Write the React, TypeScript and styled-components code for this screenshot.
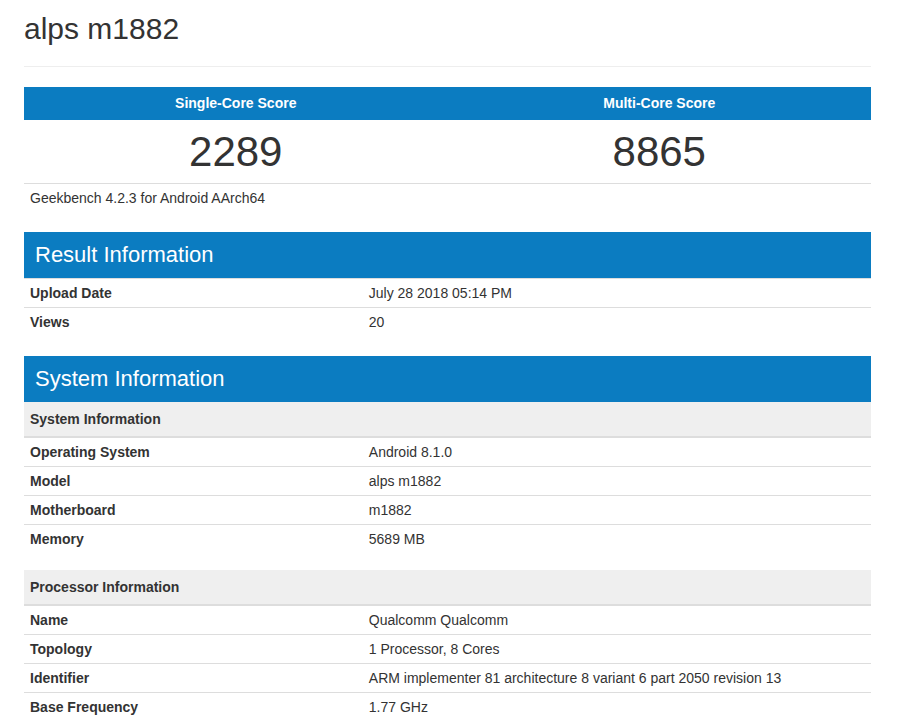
import styled, { createGlobalStyle } from "styled-components";

const GlobalStyle = createGlobalStyle`
  body {
    margin: 0;
    background: #ffffff;
    color: #333333;
    font-family: "Liberation Sans", Arial, sans-serif;
    font-size: 14px;
  }
`;

const BLUE = "#0b7cc1";

const Page = styled.div`
  width: 847px;
  padding: 12px 0 0 24px;
`;

const Title = styled.h1`
  margin: 0;
  font-size: 30px;
  font-weight: 400;
  line-height: 33px;
  color: #333333;
`;

const Divider = styled.hr`
  margin: 21px 0 20px;
  border: 0;
  border-top: 1px solid #eeeeee;
`;

const ScoreGrid = styled.div`
  display: grid;
  grid-template-columns: 1fr 1fr;
`;

const ScoreHead = styled.div`
  background: ${BLUE};
  color: #ffffff;
  font-weight: 700;
  font-size: 14px;
  line-height: 33px;
  text-align: center;
`;

const ScoreValue = styled.div`
  font-size: 42px;
  line-height: 63px;
  text-align: center;
  color: #333333;
`;

const Note = styled.div`
  border-top: 1px solid #dddddd;
  padding: 4px 6px 5px;
  line-height: 20px;
  margin-bottom: 19px;
`;

const Section = styled.section`
  margin-bottom: 20px;
`;

const SectionHead = styled.h2`
  margin: 0;
  background: ${BLUE};
  color: #ffffff;
  font-size: 22px;
  font-weight: 400;
  line-height: 46px;
  padding: 0 11px;
`;

const Group = styled.div`
  & + & {
    margin-top: 17px;
  }
`;

const GroupHead = styled.div`
  background: #efefef;
  border-bottom: 1px solid #dddddd;
  font-weight: 700;
  line-height: 20px;
  padding: 7px 6px;
`;

const Row = styled.div`
  display: grid;
  grid-template-columns: 40% 60%;
  line-height: 20px;
  border-top: 1px solid #dddddd;
`;

const Label = styled.div`
  padding: 4px 6px;
  font-weight: 700;
`;

const Value = styled.div`
  padding: 4px 6px;
`;

type Item = [string, string];

const resultInfo: Item[] = [
  ["Upload Date", "July 28 2018 05:14 PM"],
  ["Views", "20"],
];

const systemInfo: Item[] = [
  ["Operating System", "Android 8.1.0"],
  ["Model", "alps m1882"],
  ["Motherboard", "m1882"],
  ["Memory", "5689 MB"],
];

const processorInfo: Item[] = [
  ["Name", "Qualcomm Qualcomm"],
  ["Topology", "1 Processor, 8 Cores"],
  ["Identifier", "ARM implementer 81 architecture 8 variant 6 part 2050 revision 13"],
  ["Base Frequency", "1.77 GHz"],
];

function Rows({ items }: { items: Item[] }) {
  return (
    <>
      {items.map(([label, value]) => (
        <Row key={label}>
          <Label>{label}</Label>
          <Value>{value}</Value>
        </Row>
      ))}
    </>
  );
}

function App() {
  return (
    <>
      <GlobalStyle />
      <Page>
        <Title>alps m1882</Title>
        <Divider />

        <ScoreGrid>
          <ScoreHead>Single-Core Score</ScoreHead>
          <ScoreHead>Multi-Core Score</ScoreHead>
          <ScoreValue>2289</ScoreValue>
          <ScoreValue>8865</ScoreValue>
        </ScoreGrid>
        <Note>Geekbench 4.2.3 for Android AArch64</Note>

        <Section>
          <SectionHead>Result Information</SectionHead>
          <Rows items={resultInfo} />
        </Section>

        <Section>
          <SectionHead>System Information</SectionHead>
          <Group>
            <GroupHead>System Information</GroupHead>
            <Rows items={systemInfo} />
          </Group>
          <Group>
            <GroupHead>Processor Information</GroupHead>
            <Rows items={processorInfo} />
          </Group>
        </Section>
      </Page>
    </>
  );
}

export default App;
